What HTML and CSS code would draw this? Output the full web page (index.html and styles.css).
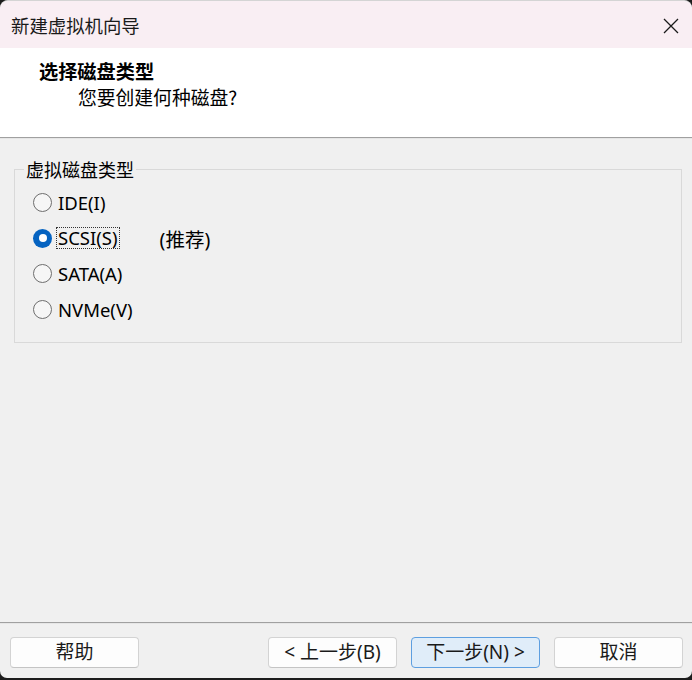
FILE: index.html
```html
<!DOCTYPE html>
<html lang="zh-CN">
<head>
<meta charset="utf-8">
<title>新建虚拟机向导</title>
<link rel="stylesheet" href="styles.css">
</head>
<body>
<div class="window">
  <div class="titlebar">
    <span class="title">新建虚拟机向导</span>
    <span class="close">
      <svg width="16" height="16" viewBox="0 0 16 16"><path d="M1 1 L15 15 M15 1 L1 15" stroke="#1a1a1a" stroke-width="1.3" fill="none"/></svg>
    </span>
  </div>
  <div class="header">
    <div class="h-title">选择磁盘类型</div>
    <div class="h-sub">您要创建何种磁盘?</div>
  </div>
  <div class="sep"></div>
  <div class="content">
    <fieldset class="group">
      <legend>虚拟磁盘类型</legend>
      <div class="row"><span class="radio"></span><span class="label">IDE(I)</span></div>
      <div class="row"><span class="radio checked"></span><span class="label focus">SCSI(S)</span><span class="rec">(推荐)</span></div>
      <div class="row"><span class="radio"></span><span class="label">SATA(A)</span></div>
      <div class="row"><span class="radio"></span><span class="label">NVMe(V)</span></div>
    </fieldset>
  </div>
  <div class="sep"></div>
  <div class="footer">
    <button class="btn">帮助</button>
    <div class="nav">
      <button class="btn">&lt; 上一步(B)</button>
      <button class="btn primary">下一步(N) &gt;</button>
      <button class="btn">取消</button>
    </div>
  </div>
</div>
</body>
</html>
```
FILE: styles.css
```css
html, body {
  margin: 0;
  padding: 0;
  background: #1c1c1c;
}
body {
  font-family: "Noto Sans", "Noto Sans CJK SC", sans-serif;
  font-size: 18px;
  color: #000;
}
.window {
  width: 692px;
  height: 678px;
  box-sizing: border-box;
  background: #f0f0f0;
  border-top: 1px solid #d4d4d4;
  border-radius: 8px 8px 7px 7px;
  overflow: hidden;
  display: flex;
  flex-direction: column;
}
.titlebar {
  height: 47px;
  flex: none;
  background: #f9eef3;
  display: flex;
  align-items: center;
  justify-content: space-between;
  padding: 0 13px 0 11px;
  font-family: "Noto Sans CJK SC", sans-serif;
}
.title {
  font-size: 18.4px;
  color: #1a1a1a;
}
.close {
  display: flex;
  width: 16px;
  height: 16px;
  margin-top: 2px;
}
.header {
  height: 89px;
  flex: none;
  background: #fff;
  box-sizing: border-box;
  padding: 10px 0 0 39px;
  font-family: "Noto Sans CJK SC", sans-serif;
  line-height: 26px;
}
.h-title {
  font-weight: bold;
  font-size: 19.2px;
}
.h-sub {
  padding-left: 39px;
  font-size: 18.8px;
}
.sep {
  flex: none;
  height: 1px;
  background: #a0a0a0;
  border-bottom: 1px solid #e6e6e6;
}
.content {
  flex: 1;
  padding: 18px 10px 0 14px;
}
.group {
  margin: 0;
  border: 1px solid #d9d9d9;
  padding: 4px 10px 15px 9px;
}
.group legend {
  padding: 0 2px;
  line-height: 24px;
  font-family: "Noto Sans CJK SC", sans-serif;
  font-size: 18px;
}
.row {
  height: 35.6px;
  display: flex;
  align-items: center;
  padding-left: 9px;
}
.radio {
  width: 19px;
  height: 19px;
  box-sizing: border-box;
  border-radius: 50%;
  border: 1px solid #6e6e6e;
  background: #f6f6f6;
  flex: none;
  margin-right: 4px;
  position: relative;
}
.radio.checked {
  border: none;
  background: #0563c1;
}
.radio.checked::after {
  content: "";
  position: absolute;
  left: 5.5px;
  top: 5.5px;
  width: 8px;
  height: 8px;
  border-radius: 50%;
  background: #fff;
}
.label {
  font-size: 18.5px;
  line-height: 20px;
  padding: 0 1px;
  border: 1px dotted transparent;
}
.label.focus {
  border-color: #333;
}
.rec {
  margin-left: 40px;
  font-size: 19.5px;
}
.footer {
  flex: none;
  height: 54px;
  box-sizing: border-box;
  padding: 13px 9px 0 10px;
  display: flex;
  justify-content: space-between;
  align-items: flex-start;
}
.nav {
  display: flex;
  gap: 14px;
}
.btn {
  width: 129px;
  height: 31px;
  box-sizing: border-box;
  background: #fdfdfd;
  border: 1px solid #d3d3d3;
  border-bottom-color: #c4c4c4;
  border-radius: 4px;
  font-family: "Noto Sans", "Noto Sans CJK SC", sans-serif;
  font-size: 19px;
  color: #1a1a1a;
  padding: 0 0 2px;
  line-height: 26px;
}
.btn.primary {
  background: #e0edf9;
  border-color: #5e9fe0;
}
```
